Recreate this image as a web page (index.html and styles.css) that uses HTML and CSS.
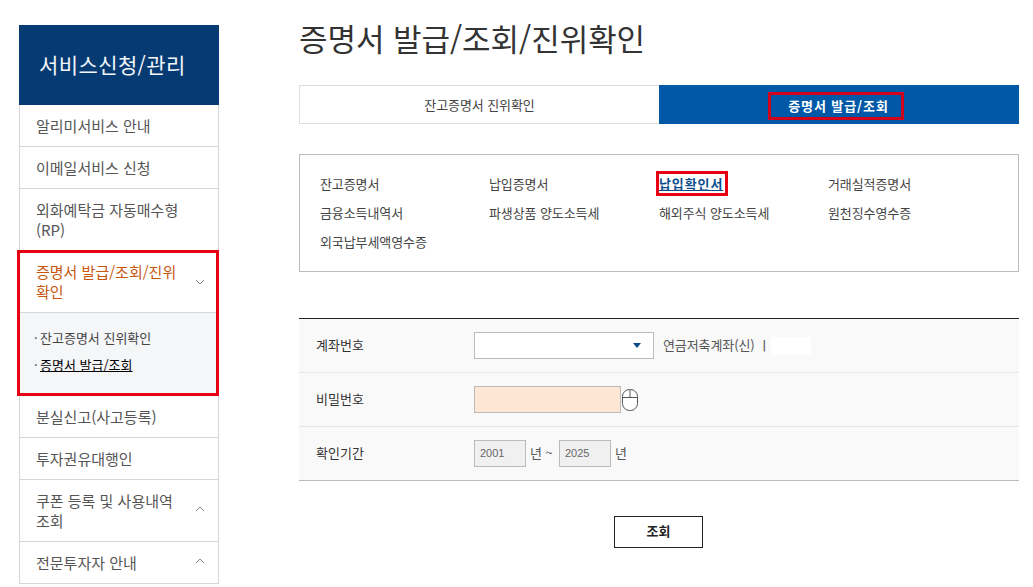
FILE: index.html
```html
<!DOCTYPE html>
<html lang="ko">
<head>
<meta charset="utf-8">
<title>증명서 발급/조회/진위확인</title>
<link rel="stylesheet" href="styles.css">
</head>
<body>
<div class="page">
  <aside class="side">
    <h2 class="side-head">서비스신청/관리</h2>
    <ul class="menu">
      <li class="item">알리미서비스 안내</li>
      <li class="item">이메일서비스 신청</li>
      <li class="item">외화예탁금 자동매수형<br>(RP)</li>
      <li class="group">
        <div class="item item-on">
          <span class="item-text">증명서 발급/조회/진위<br>확인</span>
          <svg class="chev" width="10" height="6" viewBox="0 0 10 6"><path d="M1 1l4 4 4-4" fill="none" stroke="#888" stroke-width="1"/></svg>
        </div>
        <div class="sub">
          <div class="sub-row"><span class="dot">·</span><span>잔고증명서 진위확인</span></div>
          <div class="sub-row"><span class="dot">·</span><a class="sub-link">증명서 발급/조회</a></div>
        </div>
        <div class="mark mark-side"></div>
      </li>
      <li class="item">분실신고(사고등록)</li>
      <li class="item">투자권유대행인</li>
      <li class="item">
        <span class="item-text">쿠폰 등록 및 사용내역<br>조회</span>
        <svg class="chev chev-up" width="10" height="6" viewBox="0 0 10 6"><path d="M1 5l4-4 4 4" fill="none" stroke="#888" stroke-width="1"/></svg>
      </li>
      <li class="item">
        <span class="item-text">전문투자자 안내</span>
        <svg class="chev chev-up" width="10" height="6" viewBox="0 0 10 6"><path d="M1 5l4-4 4 4" fill="none" stroke="#888" stroke-width="1"/></svg>
      </li>
    </ul>
  </aside>

  <main class="main">
    <h1 class="title">증명서 발급/조회/진위확인</h1>
    <div class="tabs">
      <div class="tab">잔고증명서 진위확인</div>
      <div class="tab tab-on"><span class="tab-label">증명서 발급/조회<span class="mark mark-fill"></span></span></div>
    </div>
    <div class="panel">
      <span>잔고증명서</span>
      <span>납입증명서</span>
      <span class="pick"><a class="pick-link">납입확인서</a><span class="mark mark-fill"></span></span>
      <span>거래실적증명서</span>
      <span>금융소득내역서</span>
      <span>파생상품 양도소득세</span>
      <span>해외주식 양도소득세</span>
      <span>원천징수영수증</span>
      <span>외국납부세액영수증</span>
    </div>
    <div class="form">
      <div class="row">
        <div class="label">계좌번호</div>
        <div class="select"><svg width="8" height="5" viewBox="0 0 8 5"><path d="M0 0h8L4 5z" fill="#0b4d8c"/></svg></div>
        <span class="note">연금저축계좌(신) ㅣ</span>
        <span class="blank"></span>
      </div>
      <div class="row">
        <div class="label">비밀번호</div>
        <div class="pw"></div>
        <svg class="mouse" width="16" height="22" viewBox="0 0 16 22"><rect x="0.5" y="0.5" width="15" height="21" rx="7" fill="#fff" stroke="#555"/><path d="M0.5 8.5h15M8 0.5v8" fill="none" stroke="#555"/></svg>
      </div>
      <div class="row">
        <div class="label">확인기간</div>
        <div class="year">2001</div>
        <span class="unit">년 ~</span>
        <div class="year">2025</div>
        <span class="unit">년</span>
      </div>
    </div>
    <div class="actions"><button class="btn" type="button">조회</button></div>
  </main>
</div>
</body>
</html>
```
FILE: styles.css
```css
* { box-sizing: border-box; }
html, body { margin: 0; padding: 0; background: #fff; }
body { height: 587px; overflow: hidden; font-family: "Noto Sans CJK KR", "Liberation Sans", sans-serif; color: #333; }
.page { display: flex; align-items: flex-start; padding: 25px 0 0 19px; gap: 80px; }

.side { width: 200px; flex: none; }
.side-head { margin: 0; height: 80px; background: #063a72; color: #f2f6fa; font-size: 21px; font-weight: 400; line-height: 78px; padding-left: 20px; letter-spacing: 0.4px; }
.menu { list-style: none; margin: 0; padding: 0; border-left: 1px solid #d6d6d6; border-right: 1px solid #d6d6d6; }
.item { display: flex; justify-content: space-between; align-items: center; border-bottom: 1px solid #d6d6d6; padding: 11px 13px 10px 16px; font-size: 15px; line-height: 20px; color: #555; min-height: 42px; }
.item-text { display: block; white-space: nowrap; }
.item-on { color: #c8560f; }
.chev-up { margin-top: -5px; }
.chev { margin-right: 0; }
.group { position: relative; }
.sub { background: #f5f6f8; height: 83px; padding: 16px 0 0 14px; font-size: 13px; line-height: 18px; color: #444; }
.sub-row { display: flex; gap: 4px; margin-bottom: 9px; }
.dot { width: 2px; }
.sub-link { color: #000; text-decoration: underline; }
.mark { position: absolute; border: 3px solid #e60012; pointer-events: none; }
.mark-side { left: -3px; right: -1px; top: -1px; bottom: 0; }
.mark-fill { inset: 0; }

.main { width: 720px; flex: none; }
.title { margin: -9px 0 0; height: 51px; font-size: 31px; font-weight: 400; line-height: 44px; color: #333; letter-spacing: -0.05px; }
.tabs { display: flex; height: 39px; margin-top: 18px; }
.tab { width: 360px; flex: none; display: flex; align-items: center; justify-content: center; border: 1px solid #ddd; border-right: 0; font-size: 13px; letter-spacing: -0.1px; color: #444; }
.tab-on { background: #0058a6; border: 0; color: #fff; font-weight: 700; letter-spacing: 0.9px; }
.tab-label { position: relative; display: inline-flex; align-items: center; height: 28px; margin: 3px 0 0 -6px; padding: 0 15px 2px 20px; }
.tab-label .mark { border-color: #d0021b; }
.panel { display: grid; grid-template-columns: 169px 170px 169px 169px; grid-auto-rows: 29px; align-items: center; height: 118px; margin-top: 30px; padding: 14px 0 0 20px; border: 1px solid #bbb; font-size: 13px; letter-spacing: -0.1px; color: #444; }
.pick { position: relative; justify-self: start; display: inline-flex; align-items: center; height: 25px; margin-left: -3px; padding: 0 5px 0 3px; letter-spacing: 0.9px; }
.pick-link { color: #0b4d8c; font-weight: 700; text-decoration: underline; }
.form { margin-top: 46px; border-top: 1px solid #222; border-bottom: 1px solid #bbb; background: #f9f9f9; }
.row { display: flex; align-items: center; height: 54px; padding-left: 17px; font-size: 13px; border-bottom: 1px solid #e6e6e6; }
.row:last-child { border-bottom: 0; height: 53px; }
.label { width: 158px; margin-top: -2px; color: #333; }
.select { width: 180px; height: 27px; display: flex; align-items: center; justify-content: flex-end; padding-right: 12px; background: #fff; border: 1px solid #bbb; }
.note { margin: -2px 0 0 9px; letter-spacing: -0.1px; color: #555; }
.blank { width: 40px; height: 18px; margin-left: 1px; background: #fff; }
.pw { width: 147px; height: 27px; background: #fde6d3; border: 1px solid #bbb; }
.mouse { margin-left: 1px; }
.year { width: 52px; height: 27px; padding-left: 5px; line-height: 24px; font-family: "Liberation Sans", sans-serif; font-size: 11px; color: #666; background: #f0f0f0; border: 1px solid #bbb; }
.unit { margin: -2px 4px 0; color: #555; width: 25px; }
.actions { display: flex; justify-content: center; margin-top: 35px; padding-right: 1px; }
.btn { width: 89px; height: 32px; background: #fff; border: 1px solid #222; font: 700 13px "Noto Sans CJK KR", sans-serif; color: #222; padding: 0 0 3px; }
```
